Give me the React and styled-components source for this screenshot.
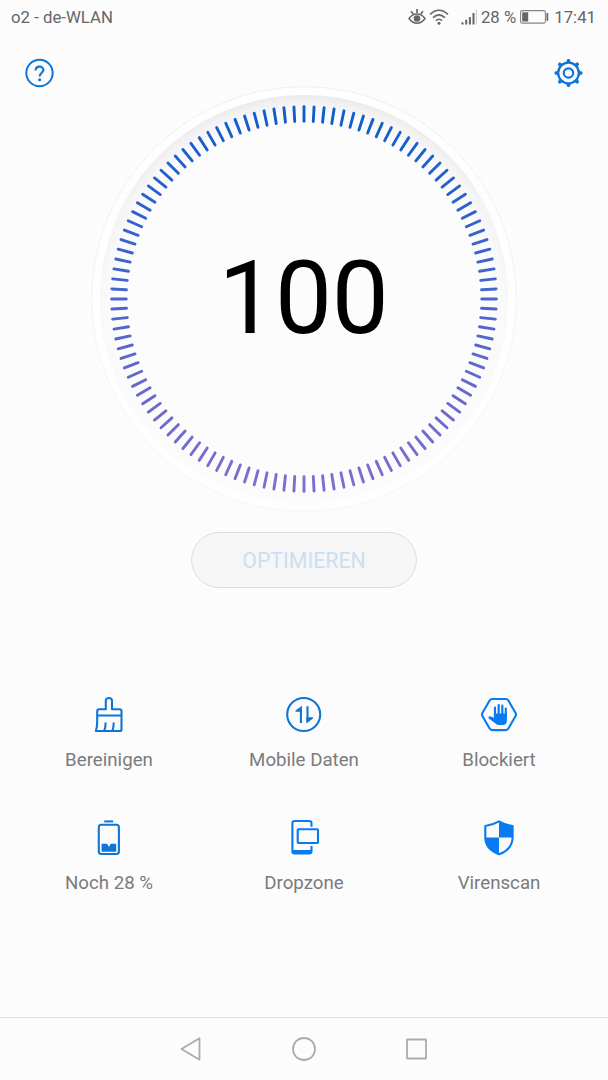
import React from 'react'
import styled, { createGlobalStyle } from 'styled-components'

const colors = {
	background: '#fcfcfc',
	blue: '#0f76d6',
	brightBlue: '#087bf0',
	status: '#666',
	label: '#7b7b7b',
	nav: '#acacac'
}

const GlobalStyle = createGlobalStyle`
	*, *::before, *::after {
		box-sizing: border-box;
	}

	body {
		margin: 0;
		background: ${colors.background};
		font-family: Roboto, 'Liberation Sans', sans-serif;
	}
`

const Screen = styled.div`
	display: flex;
	flex-direction: column;
	width: 608px;
	height: 1080px;
	overflow: hidden;
	background: ${colors.background};
`

const StatusBar = styled.div`
	display: flex;
	align-items: center;
	justify-content: space-between;
	height: 34px;
	padding: 0 12px 0 11px;
	font-size: 16.8px;
	line-height: 34px;
	color: ${colors.status};
	white-space: nowrap;
`

const StatusIcons = styled.div`
	display: flex;
	align-items: center;

	svg {
		display: block;
		flex: none;
	}
`

const Connectivity = styled.div`
	display: flex;
	gap: 12px;
	margin-left: 3px;
`

const Percent = styled.span`
	margin: 0 4px 0 3px;
`

const Clock = styled.span`
	margin-left: 5px;
`

const Header = styled.header`
	display: flex;
	justify-content: space-between;
	height: 52px;
	padding: 24px 24px 0;
`

const IconButton = styled.button`
	width: 30px;
	height: 30px;
	padding: 0;
	border: 0;
	background: none;
	color: ${colors.blue};

	svg {
		display: block;
	}
`

const Dial = styled.div`
	display: grid;
	place-items: center;
	width: 426px;
	height: 426px;
	margin: 0 auto;

	> * {
		grid-area: 1 / 1;
	}
`

const Score = styled.div`
	padding-right: 1px;
	font-size: 101.500px;
	line-height: 120px;
	letter-spacing: -.3px;
	color: #000;
`

const OptimizeButton = styled.button`
	width: 226px;
	height: 56px;
	margin: 20px auto 0;
	padding: 0;
	border: 1px solid #dedede;
	border-radius: 28px;
	background: #f6f6f6;
	font-family: inherit;
	font-size: 21.3px;
	color: #c9dff3;
`

const Tools = styled.div`
	display: grid;
	grid-template-columns: repeat(3, 195px);
	grid-auto-rows: 122.5px;
	justify-content: center;
	margin-top: 108px;
`

const Tool = styled.div`
	display: flex;
	flex-direction: column;
	align-items: center;
	color: ${({$bright}) => $bright ? colors.brightBlue : colors.blue};

	svg {
		display: block;
	}
`

const ToolLabel = styled.div`
	margin-top: 14px;
	font-size: 18.7px;
	line-height: 24px;
	color: ${colors.label};
	white-space: nowrap;
`

const NavBar = styled.nav`
	display: flex;
	align-items: center;
	justify-content: center;
	gap: 84px;
	height: 63px;
	margin-top: auto;
	padding-bottom: 1px;
	border-top: 1px solid #dcdcdc;
	color: ${colors.nav};
`

const EyeIcon = () => (
  <svg width="18" height="18" viewBox="0 0 18 18" fill="none" stroke="currentColor" strokeWidth="1.5">
    <path d="M1 10.5Q4.3 6 9 6t8 4.500Q13.700 15.200 9 15.200T1 10.500Z" />
    <path d="M9 1v4M3 3.300l2.200 2.700M15 3.300L12.800 6" strokeWidth="1.700" />
    <circle cx="9" cy="10.500" r="3.300" fill="currentColor" stroke="none" />
  </svg>
)

const WifiIcon = () => (
  <svg width="20" height="18" viewBox="0 0 20 18" fill="none" stroke="currentColor" strokeWidth="1.600">
    <path d="M1 6.300Q10-1.800 19 6.300M4 9.700Q10 4.200 16 9.700M6.900 12.700Q10 9.800 13.100 12.700" />
    <circle cx="10" cy="15.200" r="1.500" fill="currentColor" stroke="none" />
  </svg>
)

const SignalIcon = () => (
  <svg width="17" height="18" viewBox="0 0 17 18" fill="currentColor">
    <path d="M0.500 14.200h2v2.300h-2zM4.200 11.800h2v4.700h-2zM7.900 9h2v7.500h-2zM11.500 5h2v11.500h-2z" />
    <path d="M14.900 1.500h1.100v15h-1.100z" opacity=".3" />
  </svg>
)

const BatteryStatusIcon = () => (
  <svg width="29" height="16" viewBox="0 0 29 16">
    <rect x=".6" y="1.600" width="24.800" height="12.500" rx="1.500" fill="none" stroke="currentColor" strokeWidth="1.100" opacity=".8" />
    <path d="M2.200 3.300h6v9.200h-6z" fill="currentColor" />
    <path d="M26.500 4h1.700v7.800h-1.700z" fill="currentColor" />
  </svg>
)

const HelpIcon = () => (
  <svg width="30" height="30" viewBox="0 0 30 30" fill="none" stroke="currentColor" strokeWidth="2">
    <circle cx="15.500" cy="15" r="13.200" />
    <path d="M11.700 12.500C11.700 7.400 19.400 7.500 19.400 12.100C19.400 14.800 15.600 14.900 15.600 18.600" strokeWidth="2.200" />
    <circle cx="15.600" cy="21.700" r="1.500" fill="currentColor" stroke="none" />
  </svg>
)

const teeth = [0, 45, 90, 135, 180, 225, 270, 315]

const GearIcon = () => (
  <svg width="30" height="30" viewBox="0 0 30 30" fill="none" stroke="currentColor" strokeWidth="2.200">
    <circle cx="14.500" cy="15" r="10.300" />
    <circle cx="14.500" cy="15" r="4.700" />
    {teeth.map(angle => (
      <path
        key={angle}
        d="M10.200 5L12.800 3.300V2.300Q12.800 .9 14.500 .9T16.200 2.300V3.300L18.800 5Z"
        fill="currentColor"
        stroke="none"
        transform={`rotate(${angle} 14.500 15)`}
      />
    ))}
  </svg>
)

const TICKS = 120
const topColor = [16, 94, 205]
const bottomColor = [130, 108, 207]

// Ticks fade from blue at the top to violet at the bottom
const tickColor = angle => {
  const t = (1 - Math.cos(angle * Math.PI / 180)) / 2
  return `rgb(${topColor.map((c, i) => Math.round(c + (bottomColor[i] - c) * t)).join(',')})`
}

const DialFace = () => (
  <svg width="426" height="426" viewBox="0 0 426 426">
    <defs>
      <linearGradient id="rim" x1="0" y1="0" x2="0" y2="1">
        <stop offset="0" stopColor="#ebebeb" />
        <stop offset=".5" stopColor="#f8f8f8" />
        <stop offset="1" stopColor="#fcfcfc" />
      </linearGradient>
      <radialGradient id="face">
        <stop offset=".91" stopColor="#fcfcfc" />
        <stop offset="1" stopColor="#fcfcfc" stopOpacity="0" />
      </radialGradient>
      <linearGradient id="ring" x1="0" y1="0" x2="0" y2="1">
        <stop offset="0" stopColor="#efefef" />
        <stop offset="1" stopColor="#f6f6f6" />
      </linearGradient>
    </defs>
    <circle cx="213" cy="213" r="212.300" fill="#fefefe" stroke="url(#ring)" />
    <circle cx="213" cy="213" r="204" fill="url(#rim)" />
    <circle cx="213" cy="213" r="204" fill="url(#face)" />
    {Array.from({length: TICKS}, (_, i) => i * 360 / TICKS).map(angle => (
      <line
        key={angle}
        x1="213"
        x2="213"
        y1="20.600"
        y2="35.300"
        stroke={tickColor(angle)}
        strokeWidth="2.900"
        strokeLinecap="round"
        transform={`rotate(${angle} 213 213)`}
      />
    ))}
  </svg>
)

const ToolIcon = ({children}) => (
  <svg width="38" height="38" viewBox="0 0 38 38" fill="none" stroke="currentColor" strokeWidth="2.100">
    {children}
  </svg>
)

const BrushIcon = () => (
  <ToolIcon>
    <path d="M15.800 13.200V4.800Q15.800 2 18.900 2T22 4.800V13.200H29.500Q31.500 13.200 31.500 15.200V33.500Q31.500 35 30 35H5.800Q7.200 31 7.200 26V15.200Q7.200 13.200 9.200 13.200Z" strokeLinejoin="round" />
    <path d="M7.200 19.500H31.500M14.300 35Q15.600 31 15.600 26.500M22.400 35Q23.700 31 23.700 26.500" />
  </ToolIcon>
)

const DataIcon = () => (
  <ToolIcon>
    <circle cx="18.700" cy="18.500" r="16.500" />
    <path d="M15.900 27V12M22.500 10.300V25.500" />
    <path d="M17 9.800V15.800H10.500V14.500ZM21.400 27.500V21.300H28V22.600Z" fill="currentColor" stroke="none" />
  </ToolIcon>
)

const HandIcon = () => (
  <ToolIcon>
    <path d="M12.300 3H25.700Q27.500 3 28.400 4.500L35.600 17Q36.500 18.500 35.600 20L28.400 32.500Q27.500 34.100 25.700 34.100H12.300Q10.500 34.100 9.600 32.500L2.400 20Q1.500 18.500 2.400 17L9.600 4.500Q10.500 3 12.300 3Z" />
    <path d="M15 20V11.500M18.700 19V9M22.300 19V9.700M25.800 20V12.500" strokeWidth="2.200" strokeLinecap="round" />
    <path d="M13.900 17.500H26.900V24.500Q26.900 29 22.500 29H19Q16.500 29 14.800 27L8.400 22.300Q8 20.200 10.100 20.300L13.900 21.700Z" fill="currentColor" stroke="none" />
  </ToolIcon>
)

const BatteryIcon = () => (
  <ToolIcon>
    <path d="M14.200 2.400H23.200" strokeWidth="2" />
    <rect x="8.800" y="5.700" width="20.100" height="29.300" rx="2.500" />
    <path d="M11.600 24.700H17.200L19 28L20.600 24.700H26.200V32.700H11.600Z" fill="currentColor" stroke="none" />
  </ToolIcon>
)

const DropzoneIcon = () => (
  <ToolIcon>
    <path d="M26.500 7.700V4.300Q26.500 2 24.200 2H9.700Q7.400 2 7.400 4.300V32.300Q7.400 34.500 9.700 34.500H24.200Q26.500 34.500 26.500 32.300V27" />
    <path d="M7 31H26.700V33L24.500 35H9L7 33Z" fill="currentColor" stroke="none" />
    <rect x="12.700" y="10.300" width="20.300" height="13.700" rx=".7" />
  </ToolIcon>
)

const ShieldIcon = () => (
  <ToolIcon>
    <path d="M19 2.300Q25.500 6 32.600 7V18Q32.600 30.300 19 35.200Q5.300 30.300 5.300 18V7Q12.500 6 19 2.300Z" strokeLinejoin="round" />
    <path d="M19 2.300Q25.500 6 32.600 7V18.500H19ZM19 18.500V35Q5.500 30.300 5.300 18.500Z" fill="currentColor" stroke="none" />
  </ToolIcon>
)

const tools = [
  {label: 'Bereinigen', Icon: BrushIcon},
  {label: 'Mobile Daten', Icon: DataIcon},
  {label: 'Blockiert', Icon: HandIcon, bright: true},
  {label: 'Noch 28 %', Icon: BatteryIcon},
  {label: 'Dropzone', Icon: DropzoneIcon, bright: true},
  {label: 'Virenscan', Icon: ShieldIcon, bright: true}
]

const NavIcon = ({children}) => (
  <svg width="28" height="28" viewBox="0 0 28 28" fill="none" stroke="currentColor" strokeWidth="1.800" strokeLinejoin="round">
    {children}
  </svg>
)

const App = () => (
  <Screen>
    <GlobalStyle />
    <StatusBar>
      <span>o2 - de-WLAN</span>
      <StatusIcons>
        <EyeIcon />
        <Connectivity>
          <WifiIcon />
          <SignalIcon />
        </Connectivity>
        <Percent>28 %</Percent>
        <BatteryStatusIcon />
        <Clock>17:41</Clock>
      </StatusIcons>
    </StatusBar>
    <Header>
      <IconButton><HelpIcon /></IconButton>
      <IconButton><GearIcon /></IconButton>
    </Header>
    <Dial>
      <DialFace />
      <Score>100</Score>
    </Dial>
    <OptimizeButton>OPTIMIEREN</OptimizeButton>
    <Tools>
      {tools.map(({label, Icon, bright}) => (
        <Tool key={label} $bright={bright}>
          <Icon />
          <ToolLabel>{label}</ToolLabel>
        </Tool>
      ))}
    </Tools>
    <NavBar>
      <NavIcon><path d="M3.500 14L21.500 3.200V24.800Z" /></NavIcon>
      <NavIcon><circle cx="14" cy="14" r="11" /></NavIcon>
      <NavIcon><rect x="5" y="4.500" width="19" height="19" rx=".5" /></NavIcon>
    </NavBar>
  </Screen>
)

export default App
